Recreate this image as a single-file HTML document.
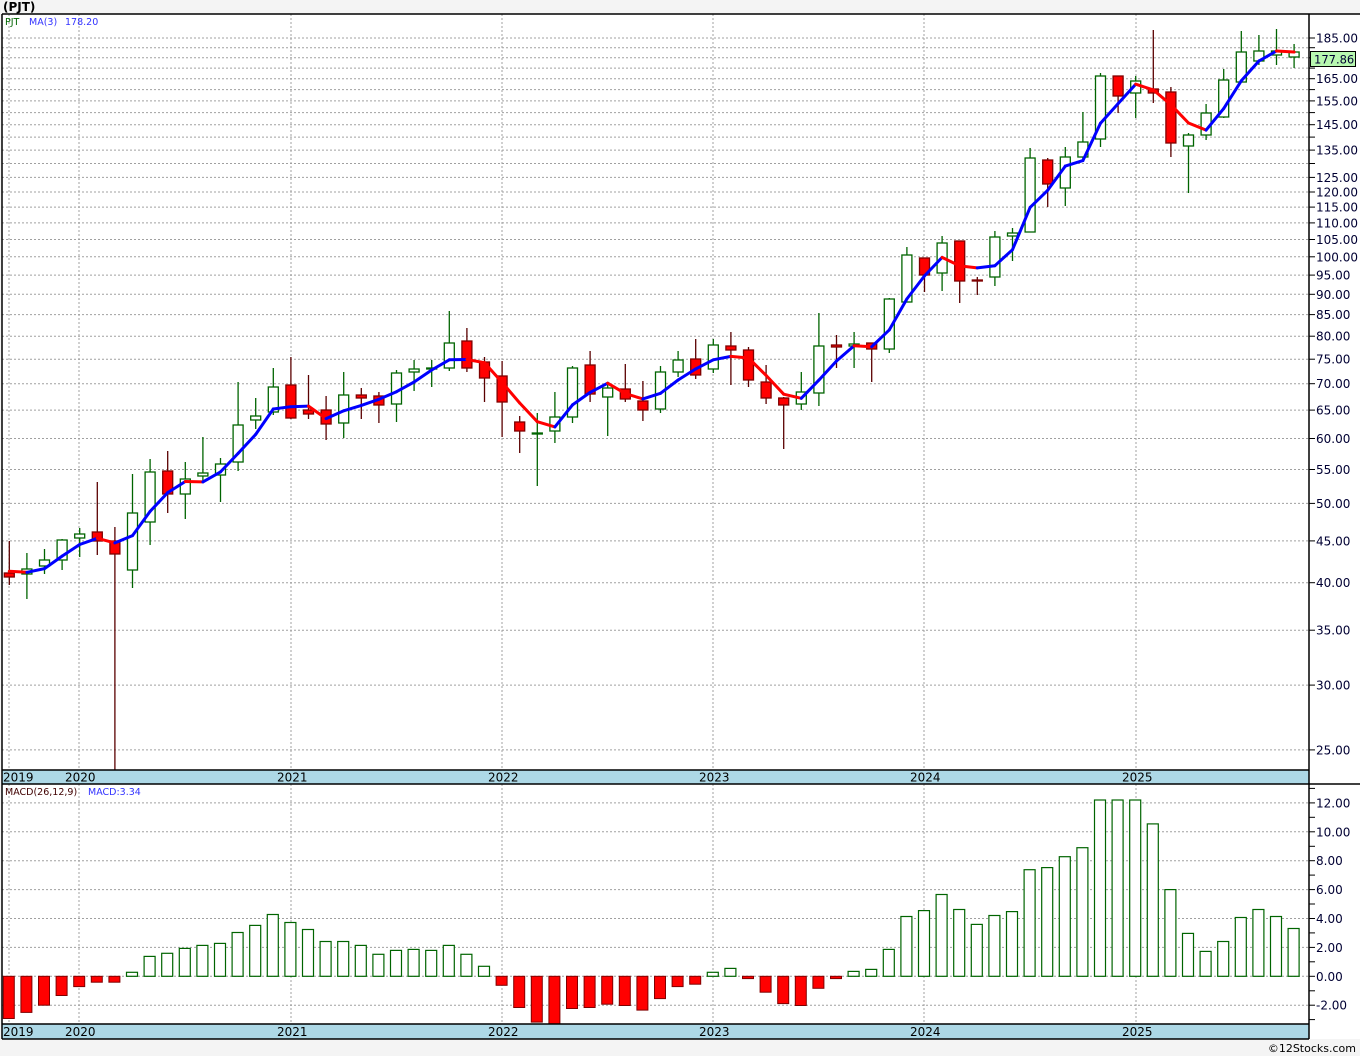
<!DOCTYPE html>
<html><head><meta charset="utf-8"><style>
html,body{margin:0;padding:0;background:#f4f4f4;}
body{width:1360px;height:1056px;overflow:hidden;font-family:"DejaVu Sans","Liberation Sans",sans-serif;}
svg{display:block}
</style></head><body>
<svg id="s" width="1360" height="1056" xmlns="http://www.w3.org/2000/svg" font-family="DejaVu Sans, Liberation Sans, sans-serif">
<rect x="0" y="0" width="1360" height="1056" fill="#f4f4f4"/>
<rect x="2" y="14" width="1358" height="1026" fill="#ffffff"/>
<text x="3" y="11" font-size="12" font-weight="bold" fill="#000">(PJT)</text>
<g id="g"></g>
<text x="5" y="25" font-size="9.5" fill="#006400">PJT</text>
<text x="29" y="25" font-size="9.5" fill="#3333ff">MA(3)</text>
<text x="65" y="25" font-size="9.5" fill="#3333ff">178.20</text>
<text x="5" y="795" font-size="9.5" fill="#400000">MACD(26,12,9)</text>
<text x="88" y="795" font-size="9.5" fill="#3333ff">MACD:3.34</text>
<text x="1356" y="1052" font-size="11" fill="#000" text-anchor="end">©12Stocks.com</text>
</svg>
<script>
var NS="http://www.w3.org/2000/svg",g=document.getElementById("g"),h="";
function py(p){return 38+(Math.log(185)-Math.log(p))*355.7;}
function my(v){return 976.3-v*14.45;}
for(var p=25;p<=185;p+=5){var y=py(p).toFixed(1);h+='<line x1="2" y1="'+y+'" x2="1309" y2="'+y+'" stroke="#a0a0a0" stroke-dasharray="2,2" stroke-width="1"/>';h+='<line x1="1309" y1="'+y+'" x2="1315" y2="'+y+'" stroke="#000"/>';}
var labs=[185,165,155,145,135,125,120,115,110,105,100,95,90,85,80,75,70,65,60,55,50,45,40,35,30,25];
labs.forEach(function(p){h+='<text x="1316" y="'+(py(p)+4.5).toFixed(1)+'" font-size="12" fill="#000033">'+p.toFixed(2)+'</text>';});
var yrs=[[79,"2020"],[291,"2021"],[502,"2022"],[713,"2023"],[924,"2024"],[1136,"2025"]];
yrs.forEach(function(a){h+='<line x1="'+a[0]+'" y1="14" x2="'+a[0]+'" y2="770" stroke="#a0a0a0" stroke-dasharray="2,2"/>';h+='<line x1="'+a[0]+'" y1="784" x2="'+a[0]+'" y2="1024" stroke="#a0a0a0" stroke-dasharray="2,2"/>';});
h+='<line x1="9" y1="14" x2="9" y2="770" stroke="#a0a0a0" stroke-dasharray="2,2"/><line x1="9" y1="784" x2="9" y2="1024" stroke="#a0a0a0" stroke-dasharray="2,2"/>';
for(var v=-3;v<=13;v++){var y=my(v).toFixed(1);if(v%2==0&&v<=12&&v>=-2)h+='<line x1="2" y1="'+y+'" x2="1309" y2="'+y+'" stroke="#a0a0a0" stroke-dasharray="2,2"/>';if(y>785&&y<1024)h+='<line x1="1309" y1="'+y+'" x2="1315" y2="'+y+'" stroke="#000"/>';if(v%2==0&&v<=12&&v>=-2)h+='<text x="1316" y="'+(+y+4.5)+'" font-size="12" fill="#000033">'+(v<0?'-':'')+Math.abs(v).toFixed(2)+'</text>';}
var C=[[541,585,573,577,0],[553,599,569,574,1],[549,574,560,566,1],[539,570,540,560,1],[528,557,534,538,1],[482,555,532,541,0],[527,770,541,554,0],[474,588,513,570,1],[459,545,472,522,1],[451,513,471,494,0],[462,519,479,494,1],[437,483,473,476,1],[458,502,464,475,1],[382,471,425,462,1],[398,429,416,420,1],[368,415,387,412,1],[357,419,385,418,0],[375,419,410,414,0],[396,440,410,424,0],[372,438,395,423,1],[388,419,395,398,0],[392,423,396,405,0],[370,422,373,404,1],[360,391,369,372,1],[360,387,368,369,1],[311,371,343,368,1],[328,372,341,368,0],[357,402,362,378,0],[361,437,376,402,0],[416,453,422,431,0],[413,486,433,434,1],[392,443,417,431,1],[366,423,368,417,1],[351,402,365,394,0],[385,436,388,397,1],[364,402,389,399,0],[381,421,401,410,0],[366,413,372,409,1],[351,377,360,372,1],[339,379,359,375,0],[339,373,345,369,1],[332,385,346,350,0],[347,387,350,380,0],[365,404,382,398,0],[397,449,398,405,0],[372,410,392,404,1],[313,406,346,393,1],[335,368,345,347,0],[332,368,344,346,1],[343,382,343,349,0],[298,353,299,349,1],[247,302,255,302,1],[258,292,258,275,0],[236,291,243,273,1],[241,303,241,281,0],[277,295,280,281,0],[231,286,237,277,1],[228,261,233,236,1],[148,232,158,232,1],[158,207,160,184,0],[147,206,157,188,1],[112,161,142,157,1],[73,147,76,139,1],[76,113,76,96,0],[76,118,81,93,1],[30,103,89,93,0],[87,157,92,143,0],[133,193,135,146,1],[104,140,113,135,1],[69,118,80,117,1],[31,82,52,82,1],[35,65,51,61,1],[29,65,51,55,1],[44,68,52,57,1]];
var M=[-2.92,-2.5,-2.0,-1.33,-0.71,-0.41,-0.41,0.28,1.38,1.59,1.93,2.14,2.28,3.03,3.52,4.28,3.72,3.24,2.41,2.41,2.14,1.52,1.79,1.86,1.79,2.14,1.52,0.69,-0.62,-2.16,-3.17,-3.4,-2.23,-2.16,-1.93,-2.02,-2.34,-1.54,-0.71,-0.55,0.28,0.55,-0.16,-1.1,-1.89,-2.02,-0.83,-0.16,0.34,0.48,1.86,4.14,4.55,5.66,4.62,3.59,4.21,4.48,7.38,7.52,8.28,8.9,12.2,12.2,12.2,10.55,6.0,2.97,1.72,2.41,4.07,4.62,4.14,3.31];
function X(i){return 9.3+17.6*i;}
function yp(y){return Math.exp(Math.log(185)-(y-38)/355.7);}
C.forEach(function(c,i){var x=X(i),g1=c[4];var sc=g1?"#006400":"#800000";var ws=g1?"#006400":"#5a0000";
h+='<line x1="'+x.toFixed(1)+'" y1="'+c[0]+'" x2="'+x.toFixed(1)+'" y2="'+c[1]+'" stroke="'+ws+'" stroke-width="1.3"/>';
var bh=Math.max(c[3]-c[2],1);h+='<rect x="'+(x-5).toFixed(1)+'" y="'+c[2]+'" width="10" height="'+bh+'" fill="'+(g1?"#fff":"#ff0000")+'" stroke="'+sc+'" stroke-width="1.3"/>';});
var cl=[yp(566),yp(571)];C.forEach(function(c){cl.push(yp(c[4]?c[2]:c[3]));});
var ma=[];for(var i=0;i<C.length;i++){ma.push(py((cl[i]+cl[i+1]+cl[i+2])/3));}
var n=ma.length;ma[n-3]=61;ma[n-2]=51;ma[n-1]=52;
for(var i=1;i<ma.length;i++){var col=ma[i]>ma[i-1]?"#ff0000":"#0000ff";h+='<line x1="'+X(i-1).toFixed(1)+'" y1="'+ma[i-1].toFixed(1)+'" x2="'+X(i).toFixed(1)+'" y2="'+ma[i].toFixed(1)+'" stroke="'+col+'" stroke-width="3" stroke-linecap="round"/>';}
M.forEach(function(v,i){var x=X(i),y0=976.3,y=Math.max(my(v),785);if(v<0)y=Math.min(my(v),1024);
if(v>=0)h+='<rect x="'+(x-6).toFixed(1)+'" y="'+y.toFixed(1)+'" width="11" height="'+(y0-y).toFixed(1)+'" fill="#fff" stroke="#006400" stroke-width="1.2"/>';
else h+='<rect x="'+(x-6).toFixed(1)+'" y="'+y0+'" width="11" height="'+(y-y0).toFixed(1)+'" fill="#ff0000" stroke="#800000" stroke-width="1"/>';});
h+='<rect x="2" y="770" width="1307" height="14" fill="#add8e6"/><rect x="2" y="1024" width="1307" height="15" fill="#add8e6"/>';
h+='<line x1="2" y1="14" x2="1360" y2="14" stroke="#000" stroke-width="1.5"/>';
h+='<line x1="2" y1="770" x2="1309" y2="770" stroke="#000" stroke-width="1.5"/><line x1="2" y1="784" x2="1360" y2="784" stroke="#000" stroke-width="1.5"/>';
h+='<line x1="2" y1="1024" x2="1309" y2="1024" stroke="#000" stroke-width="1.5"/><line x1="2" y1="1039" x2="1309" y2="1039" stroke="#000" stroke-width="1.5"/>';
h+='<line x1="2" y1="14" x2="2" y2="1039" stroke="#000" stroke-width="1.5"/><line x1="1309" y1="14" x2="1309" y2="1039" stroke="#000" stroke-width="1.5"/>';
h+='<rect x="1309.5" y="1039" width="51" height="17" fill="#f4f4f4"/>';
var dl=[[3,"2019"]].concat(yrs.map(function(a){return [a[0]-14,a[1]];}));
dl.forEach(function(a){h+='<text x="'+a[0]+'" y="781.5" font-size="12" fill="#000">'+a[1]+'</text><text x="'+a[0]+'" y="1036" font-size="12" fill="#000">'+a[1]+'</text>';});
h+='<rect x="1310.5" y="51.5" width="45" height="15" fill="#b8f8b0" stroke="#000"/><text x="1314" y="63.5" font-size="11.5" fill="#000033">177.86</text>';
g.innerHTML=h;
</script>
</body></html>
